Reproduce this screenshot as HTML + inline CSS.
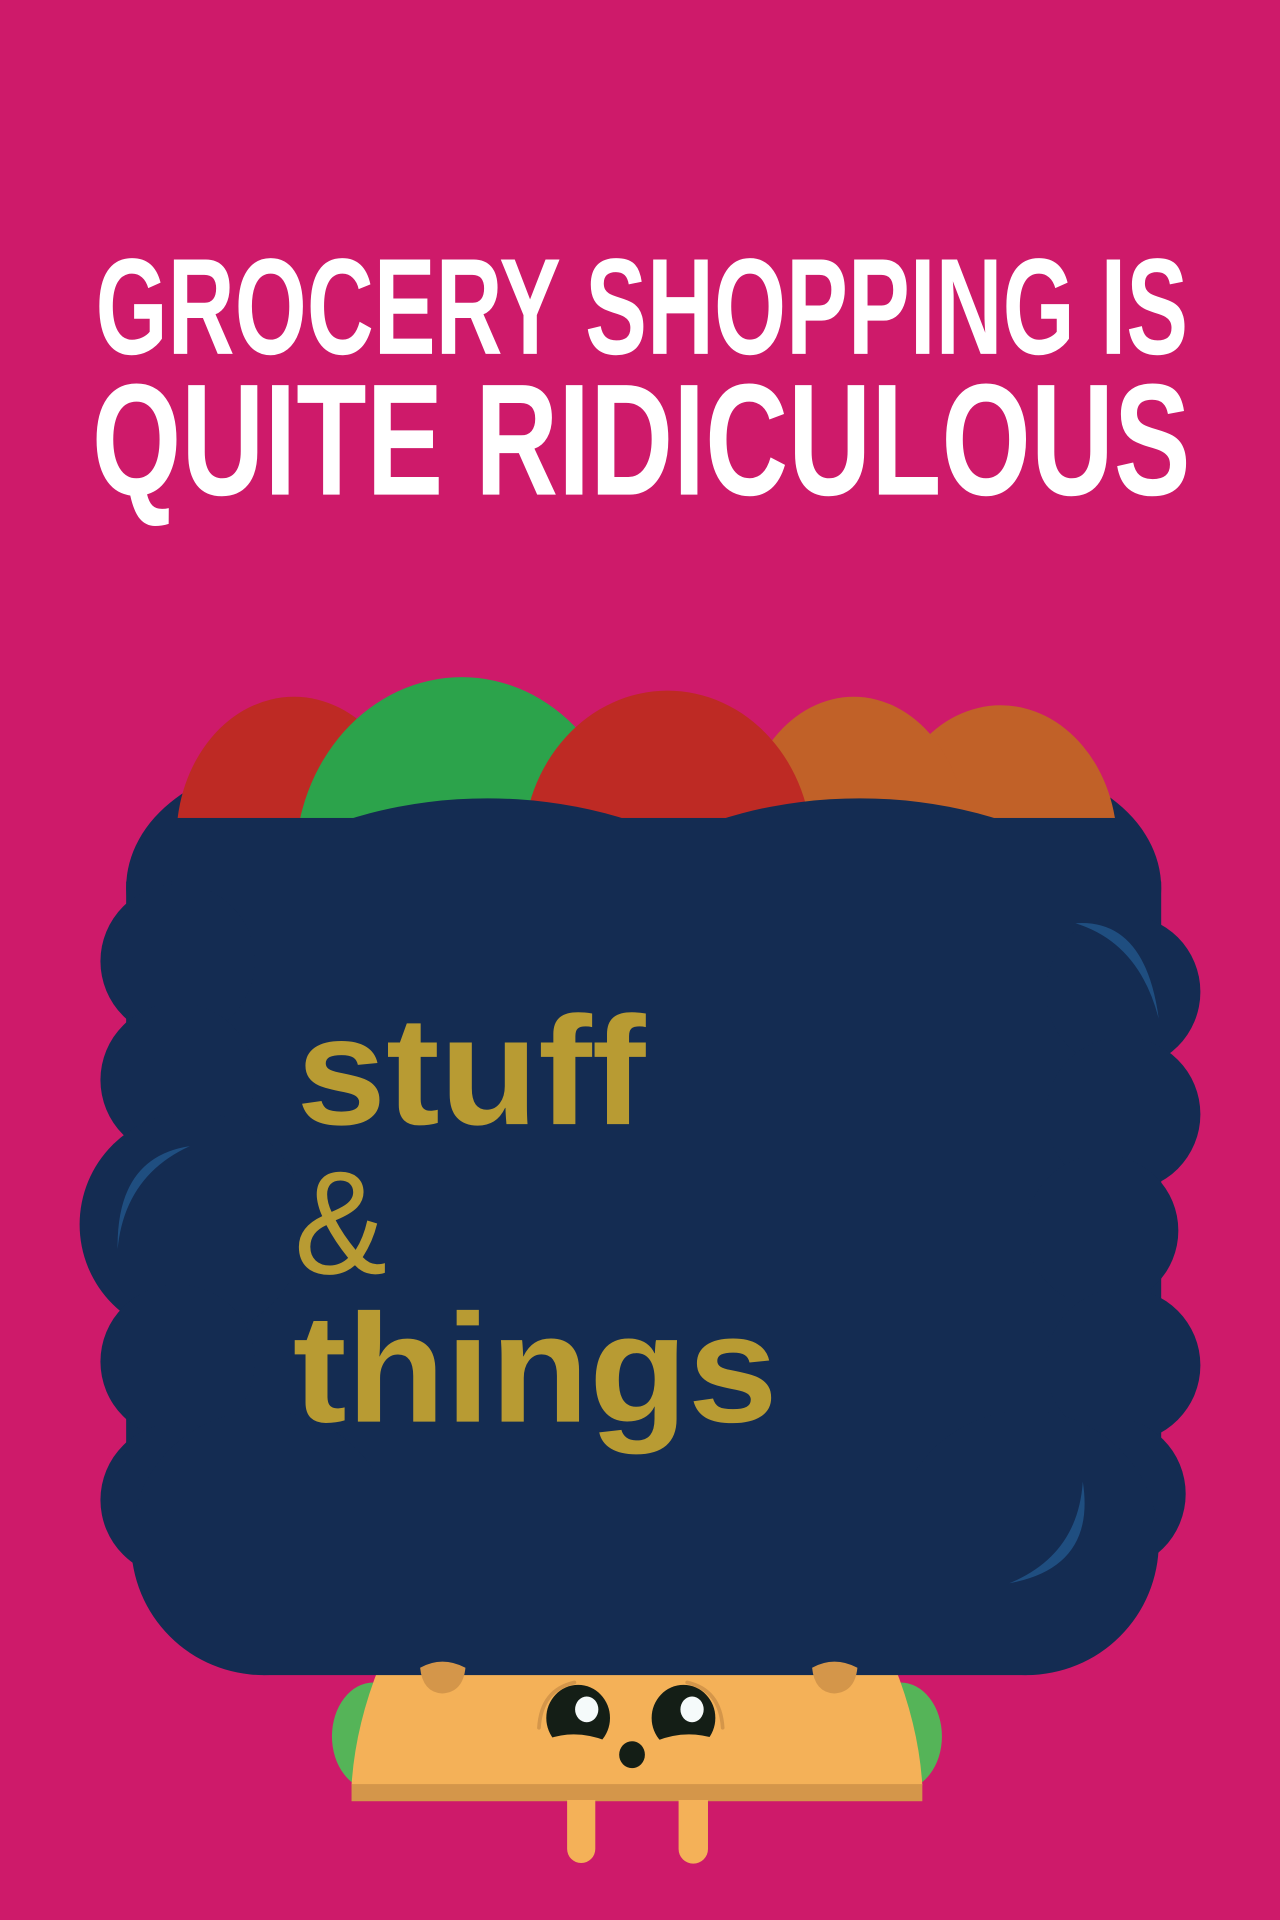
<!DOCTYPE html>
<html><head><meta charset="utf-8"><style>html,body{margin:0;padding:0;background:#CE1A6A;}svg{display:block}</style></head>
<body>
<svg width="1280" height="1920" viewBox="0 0 1045 1568" preserveAspectRatio="none" xmlns="http://www.w3.org/2000/svg">
<defs>
<clipPath id="ballclip"><rect x="0" y="0" width="1045" height="669"/></clipPath>
<clipPath id="scclip"><rect x="242" y="600" width="613" height="100"/></clipPath>
</defs>
<rect width="1045" height="1568" fill="#CE1A6A"/>
<g font-family="'Liberation Sans', sans-serif" font-weight="bold" fill="#fff">
<text x="78" y="289" font-size="112" textLength="892" lengthAdjust="spacingAndGlyphs">GROCERY SHOPPING IS</text>
<text x="75" y="404" font-size="130" textLength="897" lengthAdjust="spacingAndGlyphs">QUITE RIDICULOUS</text>
</g>
<!-- character behind -->
<ellipse cx="305" cy="1418" rx="34" ry="44" fill="#55B458"/>
<ellipse cx="735" cy="1418" rx="34" ry="44" fill="#55B458"/>
<path d="M310 1360 L730 1360 Q750 1410 753 1458 L287 1458 Q290 1410 310 1360 Z" fill="#F4B158"/>
<rect x="287" y="1457" width="466" height="14" fill="#D4964A"/>
<path d="M463 1470 h23 v40 a11.5 11.5 0 0 1 -23 0 z" fill="#F4B158"/>
<path d="M554 1470 h24 v40 a12 12 0 0 1 -24 0 z" fill="#F4B158"/>
<ellipse cx="472" cy="1403" rx="26" ry="27" fill="#141E16"/>
<ellipse cx="558" cy="1403" rx="26" ry="27" fill="#141E16"/>
<ellipse cx="479" cy="1396" rx="9.5" ry="10.5" fill="#F5FAFA"/>
<ellipse cx="565" cy="1396" rx="9.5" ry="10.5" fill="#F5FAFA"/>
<path d="M445 1432 L448 1420 Q470 1412 496 1422 L500 1432 Z" fill="#F4B158"/>
<path d="M531 1432 L535 1422 Q560 1412 584 1420 L587 1432 Z" fill="#F4B158"/>
<ellipse cx="516" cy="1433" rx="10.5" ry="11" fill="#141E16"/>
<path d="M440 1411 Q442 1380 469 1374" stroke="#D4964A" stroke-width="3" fill="none" stroke-linecap="round"/>
<path d="M590 1411 Q588 1380 561 1374" stroke="#D4964A" stroke-width="3" fill="none" stroke-linecap="round"/>
<!-- navy base -->
<g fill="#142C52">
<ellipse cx="240" cy="725" rx="137" ry="103"/>
<ellipse cx="810" cy="725" rx="138" ry="103"/>
<rect x="103" y="720" width="845" height="520"/>
<circle cx="145" cy="785" r="63"/>
<circle cx="145" cy="882" r="63"/>
<circle cx="157" cy="1000" r="92"/>
<circle cx="145" cy="1112" r="63"/>
<circle cx="145" cy="1225" r="63"/>
<circle cx="917" cy="810" r="63"/>
<circle cx="917" cy="910" r="63"/>
<circle cx="900" cy="1005" r="62"/>
<circle cx="917" cy="1115" r="63"/>
<circle cx="905" cy="1220" r="63"/>
<circle cx="215" cy="1260" r="108"/>
<circle cx="838" cy="1260" r="108"/>
<rect x="215" y="1200" width="623" height="168"/>
</g>
<!-- produce -->
<g clip-path="url(#ballclip)">
<ellipse cx="240" cy="685" rx="96" ry="116" fill="#BE2A24"/>
<ellipse cx="817" cy="690" rx="95" ry="114" fill="#C16128"/>
<ellipse cx="697" cy="684" rx="92" ry="115" fill="#C16128"/>
<ellipse cx="377" cy="705" rx="136" ry="152" fill="#2CA34B"/>
<ellipse cx="545" cy="695" rx="118" ry="131" fill="#BE2A24"/>
</g>
<g fill="#142C52">
<g clip-path="url(#scclip)">
<ellipse cx="398" cy="810" rx="250" ry="158"/>
<ellipse cx="702" cy="810" rx="250" ry="158"/>
</g>
<rect x="140" y="668" width="772" height="60"/>
</g>
<!-- crescents -->
<path d="M878 754 Q935 750 946 832 Q930 770 878 754 Z" fill="#1F4E80"/>
<path d="M155 936 Q95 945 96 1020 Q102 960 155 936 Z" fill="#1F4E80"/>
<path d="M824 1293 Q895 1280 884 1210 Q880 1270 824 1293 Z" fill="#1F4E80"/>
<!-- hands -->
<path d="M343 1362 Q361 1352 380 1362 Q378 1382 361 1383 Q345 1382 343 1362 Z" fill="#D4964A"/>
<path d="M663 1362 Q681 1352 700 1362 Q698 1382 681 1383 Q665 1382 663 1362 Z" fill="#D4964A"/>
<!-- text -->
<g font-family="'Liberation Sans', sans-serif" fill="#B89B33">
<text x="242" y="918" font-size="126" font-weight="bold" textLength="285" lengthAdjust="spacingAndGlyphs">stuff</text>
<text x="240" y="1040" font-size="120" textLength="76" lengthAdjust="spacingAndGlyphs">&amp;</text>
<text x="239" y="1161" font-size="126" font-weight="bold" textLength="396" lengthAdjust="spacingAndGlyphs">things</text>
</g>
</svg>
</body></html>
